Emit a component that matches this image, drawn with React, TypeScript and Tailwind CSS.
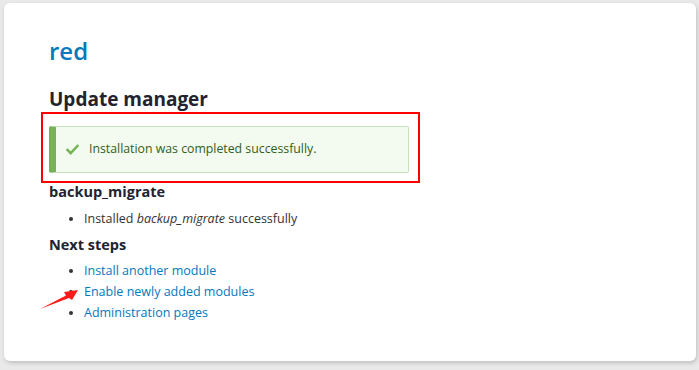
export default function App() {
  return (
    <div className="w-[699px] h-[370px] bg-[#e9e9e9] pt-[3px] pl-[4px] pr-[3px] font-['Open_Sans',sans-serif] text-[#333333]">
      <div className="relative h-[358px] bg-white rounded-[6px] shadow-[1px_2px_4px_rgba(0,0,0,0.18)] pl-[45px] pt-[33px]">
        <h1 className="text-[24px] leading-[30px] text-[#0678be] font-semibold">red</h1>

        <h2 className="mt-[21px] text-[19px] leading-[24px] font-bold text-[#222330]">Update manager</h2>

        <div className="mt-[15px] w-[360px] h-[47px] flex items-center bg-[#f3faef] border border-[#c9e1bd] border-l-[7px] border-l-[#77b259] rounded-[2px] pl-[10px] text-[#325e1c] text-[12.3px]">
          <svg viewBox="0 0 14 12" className="w-[13px] h-[11px] mr-[10px]" fill="none">
            <path d="M1.5 6.5 L5 10 L12.5 2" stroke="#73b355" strokeWidth="2.6" strokeLinecap="square" />
          </svg>
          <span>Installation was completed successfully.</span>
        </div>

        <div className="absolute left-[37px] top-[109px] w-[379px] h-[71px] border-2 border-[#ff0000]"></div>

        <h3 className="mt-[9px] text-[14.5px] leading-[20px] font-bold text-[#222330]">backup_migrate</h3>
        <ul className="mt-[6px] pl-[35px] list-disc text-[12.5px] leading-[21px] marker:text-[#333]">
          <li>
            Installed <em>backup_migrate</em> successfully
          </li>
        </ul>

        <h3 className="mt-[6px] text-[14.5px] leading-[20px] font-bold text-[#222330]">Next steps</h3>
        <ul className="mt-[5px] pl-[35px] list-disc text-[12.5px] leading-[21px] text-[#333]">
          <li>
            <a href="#" className="text-[#0678be]">Install another module</a>
          </li>
          <li>
            <a href="#" className="text-[#0678be]">Enable newly added modules</a>
          </li>
          <li>
            <a href="#" className="text-[#0678be]">Administration pages</a>
          </li>
        </ul>

        <svg className="absolute left-[32px] top-[282px]" width="46" height="28" viewBox="0 0 46 28">
          <path d="M4 24 L30 10.5 L28 7 L42 5 L36 15 L33 13 Z" fill="#ff1a1a" />
        </svg>
      </div>
    </div>
  );
}
